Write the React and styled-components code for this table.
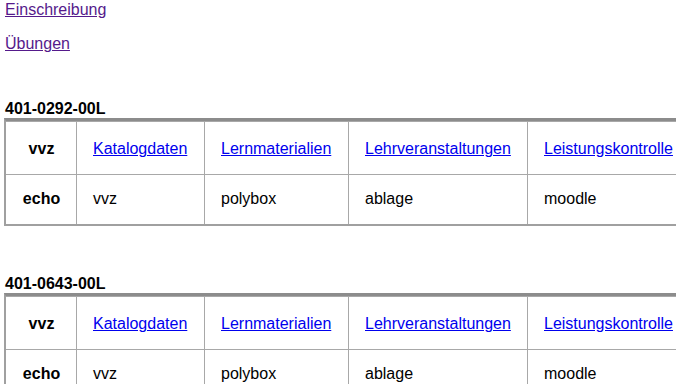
import React from "react";
import styled, { createGlobalStyle } from "styled-components";

const GlobalStyle = createGlobalStyle`
  html, body {
    margin: 0;
    padding: 0;
    overflow: hidden;
    background: #ffffff;
  }
  body {
    font-family: "Liberation Sans", Arial, Helvetica, sans-serif;
    font-size: 16px;
    line-height: 18px;
    color: #000000;
  }
`;

const Page = styled.div`
  padding: 0 0 0 4px;
`;

const LinkPara = styled.p`
  margin: 16px 0;
  padding-left: 1px;
  &:first-child {
    margin-top: 1px;
  }
`;

const NavLink = styled.a`
  color: ${(p) => (p.$visited ? "#551a8b" : "#0000ee")};
  text-decoration: underline;
`;

const Section = styled.section`
  margin: 47px 0 49px;
`;

const Heading = styled.div`
  font-weight: bold;
  line-height: 18px;
  padding-left: 1px;
  white-space: nowrap;
`;

const Table = styled.table`
  border-collapse: separate;
  border-spacing: 0;
  table-layout: fixed;
  width: 724px;
  border-top: 3px solid #8c8c8c;
  border-left: 2px solid #a0a0a0;
  border-bottom: 2px solid #a0a0a0;
  border-right: 2px solid #a0a0a0;
`;

const Row = styled.tr``;

const cellBase = `
  box-sizing: border-box;
  border-right: 1px solid #a8a8a8;
  line-height: 18px;
  white-space: nowrap;
  vertical-align: top;
  &:last-child {
    border-right: none;
  }
`;

const HeadCell = styled.th`
  ${cellBase}
  width: ${(p) => p.$w}px;
  font-weight: bold;
  text-align: center;
  padding: ${(p) => (p.$first ? "18px 15px 16px 16px" : "15px 15px 16px 16px")};
  border-top: ${(p) => (p.$first ? "1px solid #a8a8a8" : "none")};
  border-bottom: ${(p) => (p.$first ? "1px solid #a8a8a8" : "none")};
`;

const Cell = styled.td`
  ${cellBase}
  width: ${(p) => (p.$w ? `${p.$w}px` : "auto")};
  text-align: left;
  padding: ${(p) => (p.$first ? "18px 14px 16px 16px" : "15px 14px 16px 16px")};
  border-top: ${(p) => (p.$first ? "1px solid #a8a8a8" : "none")};
  border-bottom: ${(p) => (p.$first ? "1px solid #a8a8a8" : "none")};
`;

const widths = [71, 128, 144, 179];

const courses = ["401-0292-00L", "401-0643-00L"];

const topLinks = ["Katalogdaten", "Lernmaterialien", "Lehrveranstaltungen", "Leistungskontrolle"];
const bottomCells = ["vvz", "polybox", "ablage", "moodle"];

function CourseTable({ code }) {
  return (
    <Section>
      <Heading>{code}</Heading>
      <Table>
        <tbody>
          <Row>
            <HeadCell $first $w={widths[0]}>vvz</HeadCell>
            {topLinks.map((t, i) => (
              <Cell key={t} $first $w={widths[i + 1]}>
                <NavLink href="#">{t}</NavLink>
              </Cell>
            ))}
          </Row>
          <Row>
            <HeadCell $w={widths[0]}>echo</HeadCell>
            {bottomCells.map((t, i) => (
              <Cell key={t} $w={widths[i + 1]}>{t}</Cell>
            ))}
          </Row>
        </tbody>
      </Table>
    </Section>
  );
}

export default function App() {
  return (
    <>
      <GlobalStyle />
      <Page>
        <LinkPara>
          <NavLink $visited href="#">Einschreibung</NavLink>
        </LinkPara>
        <LinkPara>
          <NavLink $visited href="#">Übungen</NavLink>
        </LinkPara>
        {courses.map((c) => (
          <CourseTable key={c} code={c} />
        ))}
      </Page>
    </>
  );
}
